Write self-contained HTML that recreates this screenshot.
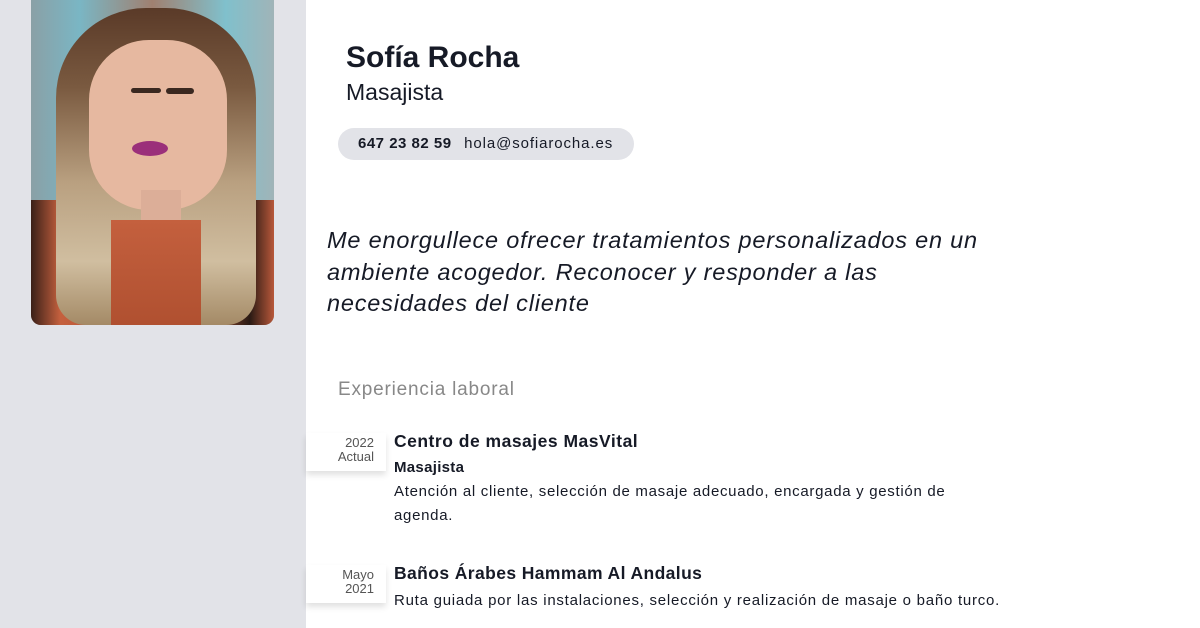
<!DOCTYPE html>
<html><head><meta charset="utf-8"><style>
*{margin:0;padding:0;box-sizing:border-box}
body{width:1200px;height:628px;overflow:hidden;background:#fff;font-family:"Liberation Sans",sans-serif;color:#161a26;position:relative}
.side{position:absolute;left:0;top:0;width:306px;height:628px;background:#e2e3e8}
.photo{position:absolute;left:31px;top:0;width:243px;height:325px;border-radius:0 0 10px 10px;overflow:hidden;background:linear-gradient(180deg,#8fa8ae 0%,#6fb4c2 30%,#a48a7a 55%,#b4583c 80%,#a24a30 100%)}
.photo div{position:absolute}
.abs{position:absolute;white-space:nowrap}
.date{position:absolute;left:306px;width:80px;background:#fff;box-shadow:0 4px 6px rgba(0,0,0,.12);text-align:right;padding-right:12px;font-size:13px;line-height:14px;color:#555}
</style></head><body>
<div class="side"></div>
<div class="photo">
 <div style="left:0;top:0;width:243px;height:325px;background:linear-gradient(90deg,#8aa0a6,#7ab6c4 20%,#a08070 50%,#80c0cc 80%,#a0b4b8)"></div>
 <div style="left:0;top:200px;width:243px;height:125px;background:linear-gradient(90deg,#3a2018 0%,#c4603e 12%,#b85436 40%,#c0603c 70%,#2a1a14 90%,#b8583a 100%)"></div>
 <div style="left:25px;top:8px;width:200px;height:317px;border-radius:90px 90px 30px 30px;background:linear-gradient(180deg,#5a3a28 0%,#7a5a40 25%,#b9a080 55%,#d0bea0 80%,#a48a66 100%)"></div>
 <div style="left:80px;top:220px;width:90px;height:105px;background:linear-gradient(180deg,#c4603e,#b05030);"></div>
 <div style="left:58px;top:40px;width:138px;height:170px;border-radius:60px;background:#e6b8a0"></div>
 <div style="left:110px;top:190px;width:40px;height:30px;background:#dcae98"></div>
 <div style="left:100px;top:88px;width:30px;height:5px;background:#3a2820;border-radius:3px"></div>
 <div style="left:135px;top:88px;width:28px;height:6px;background:#3a2820;border-radius:3px"></div>
 <div style="left:101px;top:141px;width:36px;height:15px;border-radius:50%;background:#9b2f7a"></div>
</div>

<div class="abs" style="left:346px;top:40px;font-size:30px;font-weight:bold;line-height:36px">Sofía Rocha</div>
<div class="abs" style="left:346px;top:78px;font-size:23px;line-height:28px">Masajista</div>
<div class="abs" style="left:338px;top:128px;width:296px;height:32px;border-radius:16px;background:#e2e3e8;font-size:15px;line-height:32px;padding-left:20px"><b style="letter-spacing:0.5px">647 23 82 59</b>&nbsp;&nbsp;&nbsp;<span style="letter-spacing:0.9px">hola@sofiarocha.es</span></div>

<div class="abs" style="left:327px;top:225px;width:665px;white-space:normal;font-size:23.5px;font-style:italic;line-height:31.5px;letter-spacing:0.8px">Me enorgullece ofrecer tratamientos personalizados en un ambiente acogedor. Reconocer y responder a las necesidades del cliente</div>

<div class="abs" style="left:338px;top:378px;font-size:19px;color:#888;line-height:24px;letter-spacing:0.8px">Experiencia laboral</div>

<div class="date" style="top:433px;height:38px;padding-top:3px">2022<br>Actual</div>
<div class="abs" style="left:394px;top:430px;font-size:17.5px;font-weight:bold;line-height:22px;letter-spacing:0.5px">Centro de masajes MasVital</div>
<div class="abs" style="left:394px;top:459px;font-size:15px;font-weight:bold;line-height:18px;letter-spacing:0.3px">Masajista</div>
<div class="abs" style="left:394px;top:480px;font-size:15px;line-height:24px;letter-spacing:0.7px">Atención al cliente, selección de masaje adecuado, encargada y gestión de<br>agenda.</div>

<div class="date" style="top:565px;height:38px;padding-top:3px">Mayo<br>2021</div>
<div class="abs" style="left:394px;top:562px;font-size:17.5px;font-weight:bold;line-height:22px;letter-spacing:0.4px">Baños Árabes Hammam Al Andalus</div>
<div class="abs" style="left:394px;top:589px;font-size:15px;line-height:24px;letter-spacing:0.75px">Ruta guiada por las instalaciones, selección y realización de masaje o baño turco.</div>
</body></html>
